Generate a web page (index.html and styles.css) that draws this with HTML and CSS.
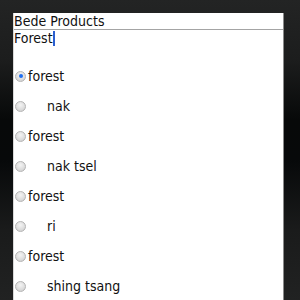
FILE: index.html
```html
<!DOCTYPE html>
<html>
<head>
<meta charset="utf-8">
<link rel="stylesheet" href="styles.css">
</head>
<body>
<div class="panel">
  <div class="title">Bede Products</div>
  <div class="field">Forest<span class="cursor"></span></div>
  <ul class="list">
    <li class="row"><span class="radio on"></span><span class="label">forest</span></li>
    <li class="row"><span class="radio"></span><span class="label sub">nak</span></li>
    <li class="row"><span class="radio"></span><span class="label">forest</span></li>
    <li class="row"><span class="radio"></span><span class="label sub">nak tsel</span></li>
    <li class="row"><span class="radio"></span><span class="label">forest</span></li>
    <li class="row"><span class="radio"></span><span class="label sub">ri</span></li>
    <li class="row"><span class="radio"></span><span class="label">forest</span></li>
    <li class="row"><span class="radio"></span><span class="label sub">shing tsang</span></li>
  </ul>
</div>
</body>
</html>
```
FILE: styles.css
```css
html, body {
  margin: 0;
  height: 300px;
  overflow: hidden;
}
body {
  background: linear-gradient(to bottom, #232424 0px, #1c1d1d 60px, #070909 120px, #07090a 160px, #1a1b1b 230px, #212222 300px);
  font-family: "DejaVu Sans", sans-serif;
  font-stretch: condensed;
  font-size: 14px;
  color: #111;
}
.panel {
  margin: 13px 16px 0 13px;
  height: 287px;
  background: #fff;
  border-right: 1px solid #8a8a8a;
  border-left: 1px solid #d8d8d8;
  box-sizing: border-box;
}
.title {
  height: 16px;
  line-height: 16px;
  border-bottom: 1px solid #a4a4a4;
  font-family: "DejaVu Sans Condensed", "DejaVu Sans", sans-serif;
}
.field {
  height: 17px;
  line-height: 17px;
  font-family: "DejaVu Sans Condensed", "DejaVu Sans", sans-serif;
  display: flex;
  align-items: center;
}
.cursor {
  display: inline-block;
  width: 2px;
  height: 15px;
  background: #2b5fd0;
}
.list {
  list-style: none;
  margin: 14px 0 0 0;
  padding: 0;
}
.row {
  height: 30px;
  display: flex;
  align-items: center;
  padding-left: 1px;
  font-family: "DejaVu Sans Condensed", "DejaVu Sans", sans-serif;
}
.radio {
  width: 11px;
  height: 11px;
  border-radius: 50%;
  box-sizing: border-box;
  border: 1px solid #b4b4b4;
  background: radial-gradient(circle at 50% 35%, #f4f4f4 0%, #dcdcdc 60%, #c8c8c8 100%);
  position: relative;
  flex: none;
}
.radio.on::after {
  content: "";
  position: absolute;
  left: 2.5px;
  top: 2.5px;
  width: 4px;
  height: 4px;
  border-radius: 50%;
  background: #1f6ef0;
}
.label {
  margin-left: 2px;
}
.label.sub {
  margin-left: 21px;
}
```
